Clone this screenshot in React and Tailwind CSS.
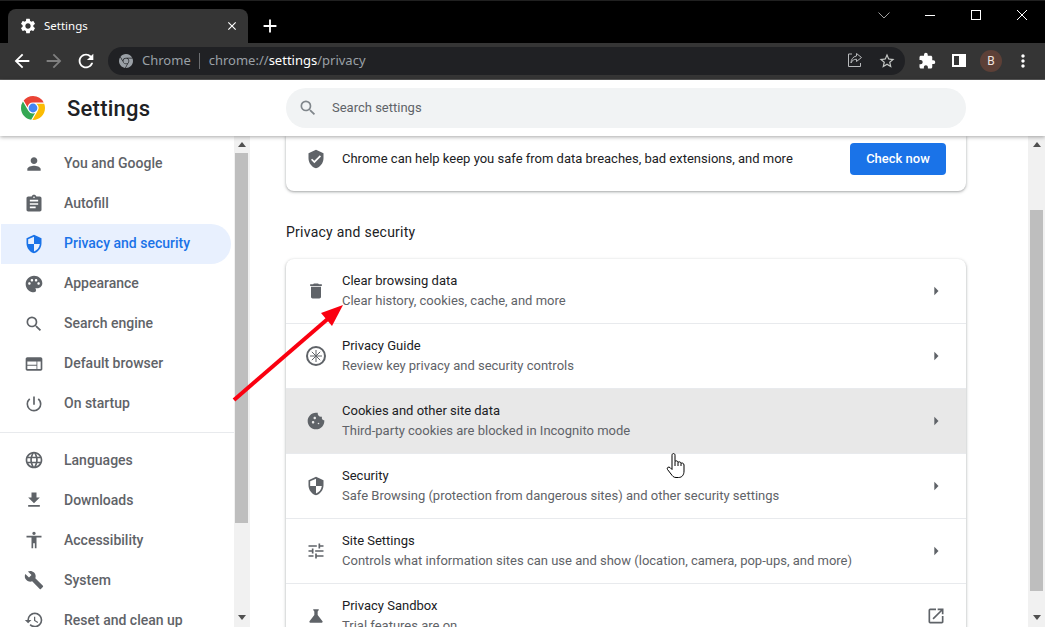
import {
  MdPerson, MdAssignment, MdPalette, MdSearch, MdWeb, MdPowerSettingsNew, MdLanguage,
  MdFileDownload, MdAccessibility, MdBuild, MdRestore, MdVerifiedUser, MdDelete, MdCookie,
  MdSecurity, MdTune, MdScience, MdOpenInNew, MdArrowRight, MdSettings, MdClose, MdAdd,
  MdArrowBack, MdArrowForward, MdRefresh, MdStarBorder, MdExtension, MdMoreVert,
} from "react-icons/md";

const navTop = [
  { label: "You and Google", icon: MdPerson },
  { label: "Autofill", icon: MdAssignment },
  { label: "Privacy and security", icon: MdSecurity, active: true },
  { label: "Appearance", icon: MdPalette },
  { label: "Search engine", icon: MdSearch },
  { label: "Default browser", icon: MdWeb },
  { label: "On startup", icon: MdPowerSettingsNew },
];

const navBottom = [
  { label: "Languages", icon: MdLanguage },
  { label: "Downloads", icon: MdFileDownload },
  { label: "Accessibility", icon: MdAccessibility },
  { label: "System", icon: MdBuild },
  { label: "Reset and clean up", icon: MdRestore },
];

function GuideIcon({ className }) {
  return (
    <svg viewBox="0 0 20 20" className={className} fill="none" stroke="currentColor">
      <circle cx="10" cy="10" r="9" strokeWidth="2" />
      <path d="M10 4v12M4 10h12M5.800 5.800l8.400 8.400M14.200 5.800l-8.400 8.400" strokeWidth="1" />
    </svg>
  );
}

const rows = [
  { title: "Clear browsing data", sub: "Clear history, cookies, cache, and more", icon: MdDelete },
  { title: "Privacy Guide", sub: "Review key privacy and security controls", icon: GuideIcon },
  { title: "Cookies and other site data", sub: "Third-party cookies are blocked in Incognito mode", icon: MdCookie, hover: true },
  { title: "Security", sub: "Safe Browsing (protection from dangerous sites) and other security settings", icon: MdSecurity },
  { title: "Site Settings", sub: "Controls what information sites can use and show (location, camera, pop-ups, and more)", icon: MdTune },
  { title: "Privacy Sandbox", sub: "Trial features are on", icon: MdScience, external: true },
];

function ChromeLogo({ className, mono }) {
  return (
    <svg viewBox="0 0 24 24" className={className}>
      <circle cx="12" cy="12" r="6" fill="#fff" fillOpacity={mono ? 0 : 1} />
      <path fill={mono ? "#9aa0a6" : "#ea4335"} d="M12 0C8.21 0 4.831 1.757 2.632 4.501l3.953 6.848A5.454 5.454 0 0 1 12 6.545h10.691A12 12 0 0 0 12 0z" />
      <path fill={mono ? "#9aa0a6" : "#34a853"} d="M1.931 5.47A11.943 11.943 0 0 0 0 12c0 6.012 4.42 10.991 10.189 11.864l3.953-6.847a5.45 5.45 0 0 1-6.865-2.29z" />
      <path fill={mono ? "#9aa0a6" : "#fbbc04"} d="M15.273 7.636a5.446 5.446 0 0 1 1.45 7.09l.002.001h-.002l-5.344 9.257c.206.01.413.016.621.016 6.627 0 12-5.373 12-12 0-1.54-.29-3.011-.818-4.364z" />
      <circle cx="12" cy="12" r="4.4" fill={mono ? "#9aa0a6" : "#4285f4"} />
    </svg>
  );
}

function NavItem({ item, top }) {
  const Icon = item.icon;
  return (
    <div className={`flex h-10 items-center rounded-r-full ${item.active ? "bg-[#e8f0fe] text-[#1a73e8]" : "text-[#5f6368]"}`}>
      <div className={`flex ${top ? "w-[63px] pl-[23px]" : "w-[64px] pl-6"}`}>
        <Icon size={20} />
      </div>
      <span className={`text-sm font-medium ${top ? "pb-[2px]" : ""}`}>{item.label}</span>
    </div>
  );
}

function Scrollbar({ thumbTop, thumbHeight, className }) {
  return (
    <div className={`flex shrink-0 flex-col items-center bg-[#f1f1f1] ${className}`}>
      <div className="flex h-[17px] shrink-0 items-center justify-center">
        <svg viewBox="0 0 8 5" className="h-[5px] w-2"><path d="M4 0l4 5H0z" fill="#505050" /></svg>
      </div>
      <div className={`w-[13px] shrink-0 bg-[#bebebe] ${thumbTop} ${thumbHeight}`} />
      <div className="flex-1" />
      <div className="flex h-[20px] shrink-0 items-center justify-center">
        <svg viewBox="0 0 8 5" className="h-[5px] w-2"><path d="M4 5l4-5H0z" fill="#505050" /></svg>
      </div>
    </div>
  );
}

export default function App() {
  return (
    <div className="relative flex h-[627px] w-[1045px] flex-col overflow-hidden bg-white font-['Roboto',sans-serif]">
      {/* tab strip */}
      <div className="flex h-[43px] shrink-0 items-start border-t border-[#202020] bg-black pl-2 text-white">
        <div className="mt-2 flex h-[34px] w-[240px] items-center rounded-t-lg bg-[#353535] pl-[11px] pr-[7px]">
          <MdSettings size={18} />
          <span className="ml-[7px] font-['Noto_Sans',sans-serif] text-[11.5px]">Settings</span>
          <MdClose size={14} className="ml-auto mr-[2px]" />
        </div>
        <div className="ml-[10px] mt-2 flex h-[34px] w-6 items-center justify-center">
          <MdAdd size={22} />
        </div>
        <div className="ml-auto flex">
          <div className="flex h-7 w-[46px] items-center justify-center">
            <svg viewBox="0 0 12 7" className="h-[7px] w-3 text-[#a0a0a0]" fill="none" stroke="currentColor"><path d="M.5.5L6 6 11.5.5" /></svg>
          </div>
          <div className="flex h-7 w-[46px] items-center justify-center">
            <div className="h-px w-[10px] bg-white" />
          </div>
          <div className="flex h-7 w-[46px] items-center justify-center">
            <div className="h-[10px] w-[10px] border border-white" />
          </div>
          <div className="flex h-7 w-[46px] items-center justify-center">
            <svg viewBox="0 0 10 10" className="h-[10px] w-[10px] text-white" fill="none" stroke="currentColor"><path d="M0 0l10 10M10 0L0 10" /></svg>
          </div>
        </div>
      </div>

      {/* toolbar */}
      <div className="flex h-[37px] shrink-0 items-center border-b border-[#5a5a5a] bg-[#353535] pl-[6px] pb-px">
        <div className="flex w-8 justify-center text-white"><MdArrowBack size={22} /></div>
        <div className="flex w-8 justify-center text-[#7f7f7f]"><MdArrowForward size={22} /></div>
        <div className="flex w-8 justify-center text-white"><MdRefresh size={22} /></div>
        <div className="ml-[6px] flex h-7 w-[797px] items-center rounded-full bg-[#202124] pl-[11px] font-['Noto_Sans',sans-serif] text-[13px] text-[#9aa0a6]">
          <ChromeLogo mono className="h-[14px] w-[14px]" />
          <span className="ml-[9px] pt-px">Chrome</span>
          <div className="ml-2 mr-[9px] h-4 w-px bg-[#6b6d70]" />
          <span className="pt-px">chrome://<span className="text-white">settings</span>/privacy</span>
          <div className="ml-auto flex pr-[2px]">
            <div className="flex w-8 justify-center">
              <svg viewBox="0 0 16 16" className="h-4 w-4" fill="none" stroke="#b8babc" strokeWidth="1">
                <path d="M5 2H1.500v12.500h12V11" />
                <path d="M9.500 1.500l5 4-5 4V7.200C7 7.200 5 8.500 4 11c0-3.500 2-6.500 5.500-7z" />
              </svg>
            </div>
            <div className="flex w-8 justify-center text-[#c4c7c5]"><MdStarBorder size={18} /></div>
          </div>
        </div>
        <div className="ml-[6px] flex w-8 justify-center text-white"><MdExtension size={18} /></div>
        <div className="flex w-8 justify-center">
          <div className="flex h-[13px] w-[14px] border-2 border-white">
            <div className="ml-auto w-[5px] bg-white" />
          </div>
        </div>
        <div className="flex w-8 justify-center">
          <div className="flex h-[22px] w-[22px] items-center justify-center rounded-full bg-[#5d4037] text-xs text-[#f1e3df]">B</div>
        </div>
        <div className="flex w-8 justify-center text-white"><MdMoreVert size={20} /></div>
      </div>

      {/* page header */}
      <div className="relative z-10 flex h-[56px] shrink-0 items-center bg-white shadow-[0_1px_4px_rgba(0,0,0,0.35)]">
        <div className="flex w-[67px] justify-center pr-[1px]">
          <ChromeLogo className="h-6 w-6" />
        </div>
        <h1 className="w-[219px] pt-px text-[22px] font-medium leading-none tracking-[0.25px] text-[#202124]">Settings</h1>
        <div className="flex h-10 w-[680px] items-center rounded-full bg-[#f1f3f4] pl-[12px] text-[#5f6368]">
          <MdSearch size={20} className="text-[#80868b]" />
          <span className="ml-[14px] text-[13px]">Search settings</span>
        </div>
      </div>

      <div className="flex min-h-0 flex-1">
        {/* sidebar */}
        <div className="w-[234px] shrink-0 overflow-hidden pt-2">
          <div className="pl-px pr-[3px]">
            {navTop.map((item) => <NavItem key={item.label} item={item} top />)}
          </div>
          <div className="mb-[7px] mt-2 h-px bg-[#e8eaed]" />
          {navBottom.map((item) => <NavItem key={item.label} item={item} />)}
        </div>
        <Scrollbar className="w-4 pr-px" thumbTop="" thumbHeight="h-[370px]" />

        {/* main column */}
        <div className="min-w-0 flex-1 overflow-hidden pl-9">
          <div className="w-[680px] rounded-b-lg bg-white pb-4 pt-[7px] shadow-[0_1px_2px_rgba(60,64,67,0.3),0_1px_3px_1px_rgba(60,64,67,0.15)]">
            <div className="flex items-center pl-[20px] pr-5">
              <MdVerifiedUser size={20} className="text-[#5f6368]" />
              <span className="ml-4 text-[13px] text-[#202124]">Chrome can help keep you safe from data breaches, bad extensions, and more</span>
              <button className="ml-auto h-8 w-24 rounded bg-[#1a73e8] text-[13px] font-medium text-white">Check now</button>
            </div>
          </div>

          <h2 className="mb-[17px] mt-[31px] text-sm leading-5 tracking-[0.25px] text-[#202124]">Privacy and security</h2>

          <div className="w-[680px] rounded-t-lg bg-white shadow-[0_1px_2px_rgba(60,64,67,0.3),0_1px_3px_1px_rgba(60,64,67,0.15)]">
            {rows.map((row, i) => {
              const Icon = row.icon;
              return (
                <div
                  key={row.title}
                  className={`flex items-center pl-5 pr-5 ${i > 0 ? "h-[65px] border-t border-[#e8eaed]" : "h-16 rounded-t-lg"} ${row.hover ? "bg-[#e8e8e8]" : ""}`}
                >
                  <Icon size={20} className="h-5 w-5 text-[#5f6368]" />
                  <div className="ml-4 text-[13px] leading-5">
                    <div className="text-[#202124]">{row.title}</div>
                    <div className="text-[#5f6368]">{row.sub}</div>
                  </div>
                  {row.external ? (
                    <MdOpenInNew size={20} className="ml-auto text-[#5f6368]" />
                  ) : (
                    <MdArrowRight size={20} className="ml-auto text-[#5f6368]" />
                  )}
                </div>
              );
            })}
          </div>
        </div>

        <Scrollbar className="w-[17px]" thumbTop="mt-[57px]" thumbHeight="h-[381px]" />
      </div>

      {/* annotation arrow over the page */}
      <svg className="absolute left-0 top-0 z-20 h-[627px] w-[1045px]" viewBox="0 0 1045 627" fill="none">
        <path d="M234 400L330 317" stroke="#fa0010" strokeWidth="4" />
        <path d="M343 305L321 313L332 326z" fill="#fa0010" />
      </svg>

      {/* mouse pointer */}
      <svg className="absolute left-[665px] top-[452px] z-20 h-[28px] w-[22px]" viewBox="0 0 22 28">
        <path d="M7 12V3.200C7 1 10 1 10 3.200V9.500C10.500 8.500 13 8.500 13 10.500 13.500 9.500 16 9.500 16 11.500 16.500 10.500 19 11 19 13V19C19 23 17 25.500 13.500 25.500H11C8.500 25.500 7.500 24 6 22L2.500 17.500C1.500 15.500 3.500 14.500 5 15.500L7 17.500Z" fill="#fff" stroke="#000" strokeWidth="1" strokeLinejoin="round" />
        <path d="M10 9.500V14M13 10.500V14M16 11.500V14" stroke="#000" strokeWidth="1" fill="none" />
      </svg>
    </div>
  );
}
